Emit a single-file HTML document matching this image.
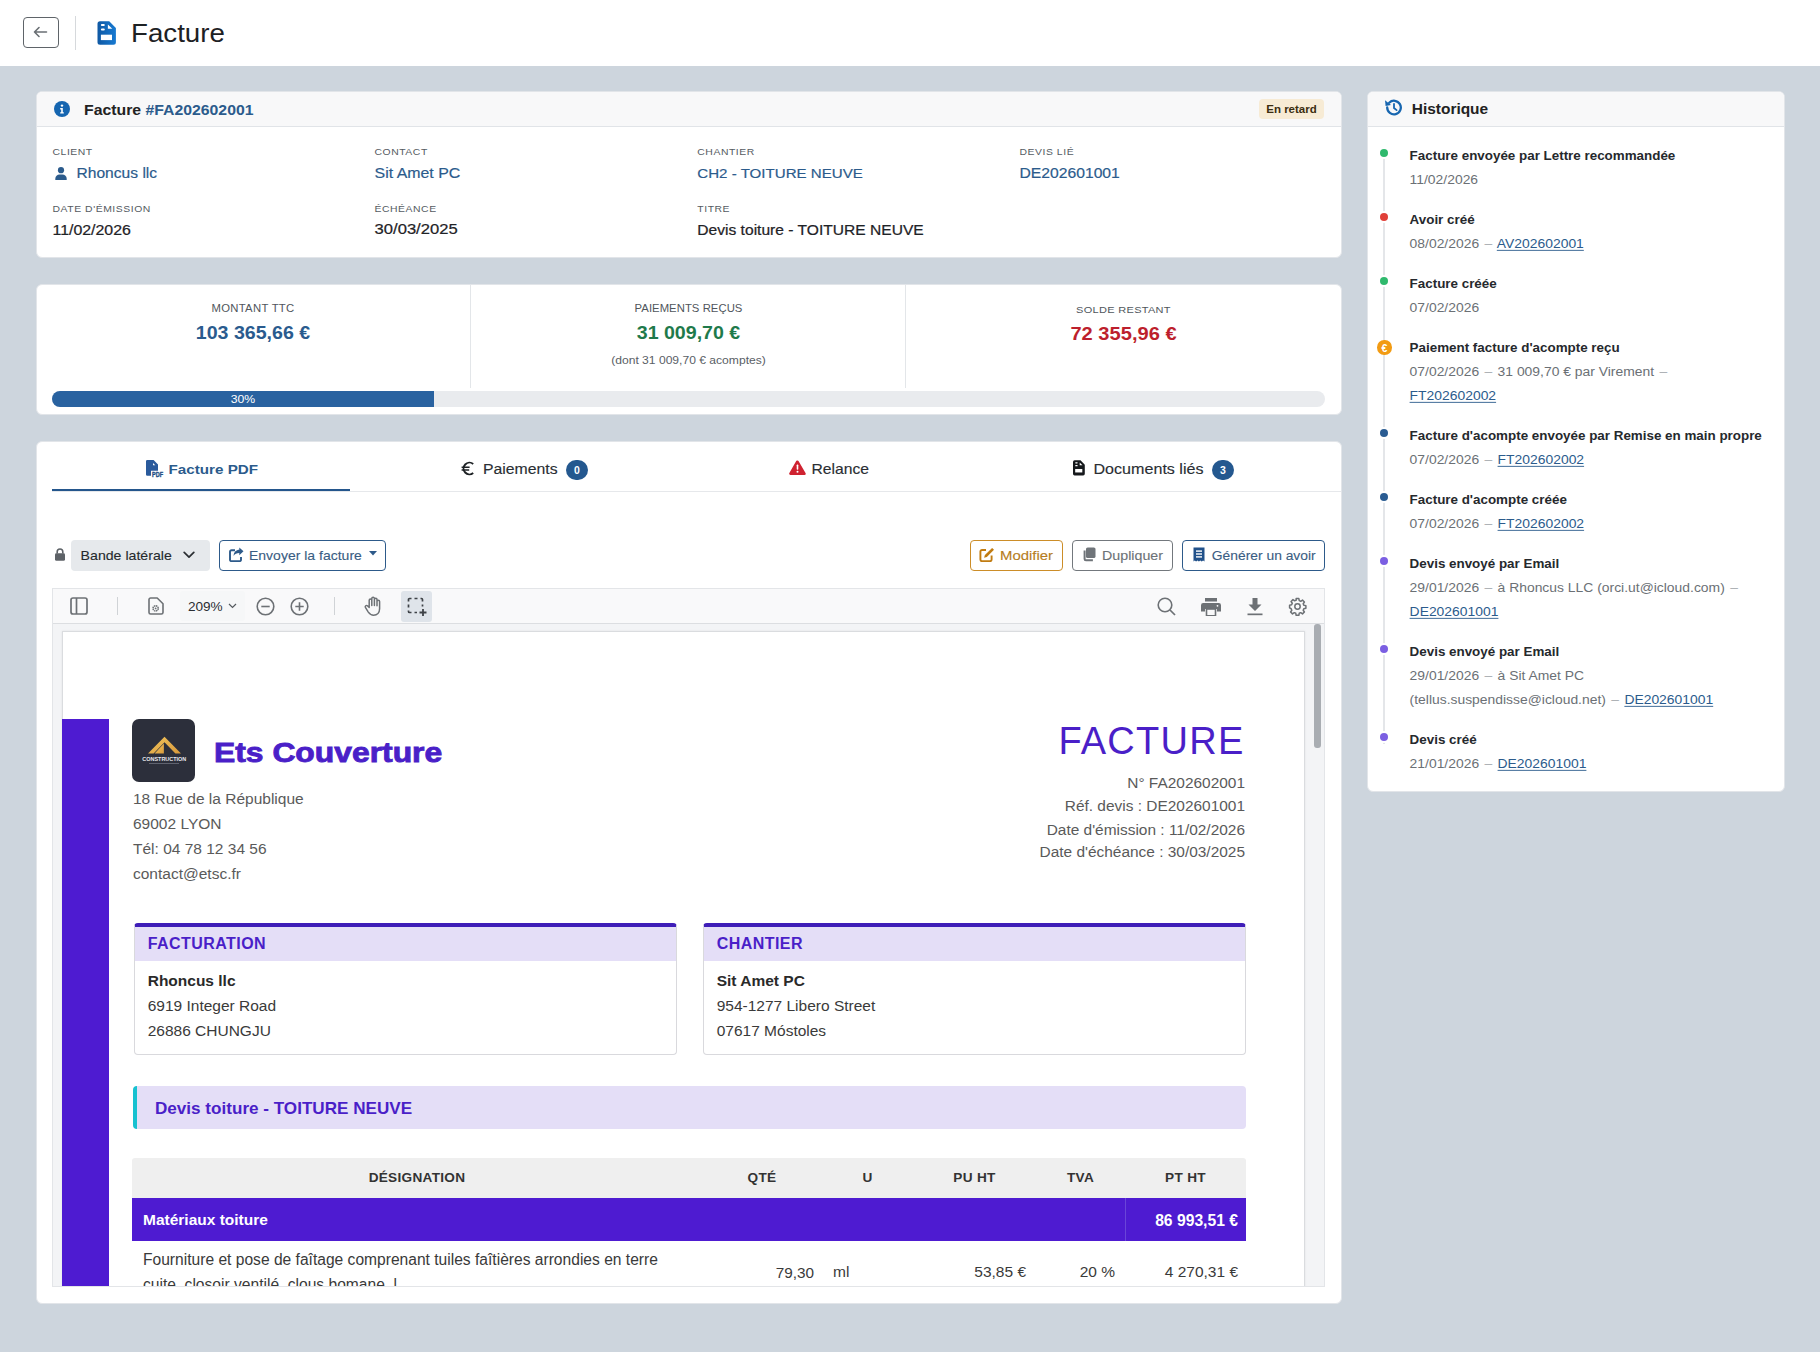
<!DOCTYPE html>
<html><head><meta charset="utf-8"><title>Facture</title>
<style>
html,body{margin:0;padding:0;}
body{width:1820px;height:1352px;position:relative;overflow:hidden;background:#cdd5dd;font-family:"Liberation Sans",sans-serif;}
.t{position:absolute;line-height:1;white-space:nowrap;}
.r{position:absolute;box-sizing:border-box;}
u{text-decoration:underline;text-underline-offset:2px;text-decoration-thickness:1px;}
</style></head><body>

<div class="r" style="left:0px;top:0px;width:1820px;height:66px;background:#fff;"></div>
<div class="r" style="left:23px;top:17px;width:36px;height:31px;border:1px solid #5f6469;border-radius:4px;"></div>
<svg class="r" style="left:32px;top:24px;" width="16" height="16" viewBox="0 0 16 16"><path d="M14.5 8H2.5M7 3.5L2.5 8 7 12.5" fill="none" stroke="#6a6f74" stroke-width="1.6" stroke-linecap="round" stroke-linejoin="round"/></svg>
<div class="r" style="left:75px;top:16px;width:1px;height:34px;background:#d6d9dc;"></div>
<svg class="r" style="left:96px;top:20px;" width="21" height="26" viewBox="0 0 21 26"><defs><linearGradient id="dg" x1="0" y1="0" x2="1" y2="0"><stop offset="0" stop-color="#0f58a3"/><stop offset="1" stop-color="#177ad2"/></linearGradient></defs><path d="M4 1.2H13.2L19.9 8V22.3A2.5 2.5 0 0 1 17.4 24.8H4A2.5 2.5 0 0 1 1.5 22.3V3.7A2.5 2.5 0 0 1 4 1.2z" fill="url(#dg)"/><path d="M11.9 4.5L16.3 8.8H11.9z" fill="#fff"/><rect x="4.9" y="4.1" width="3.9" height="1.9" rx=".9" fill="#fff"/><rect x="4.9" y="8.5" width="3.9" height="2" rx="1" fill="#fff"/><rect x="4.9" y="14.7" width="11.1" height="5.4" fill="#fff"/></svg>
<div class="t" style="font-size:27.7px;font-weight:400;color:#1d2124;top:18.55px;transform:scaleY(0.9);transform-origin:0 23.45px;left:131px;">Facture</div>
<div class="r" style="left:36px;top:91px;width:1306px;height:167px;background:#fff;border:1px solid #e2e5e9;border-radius:6px;"></div>
<div class="r" style="left:37px;top:92px;width:1304px;height:35px;background:#f8f8f9;border-bottom:1px solid #e1e4e8;border-radius:5px 5px 0 0;"></div>
<svg class="r" style="left:54px;top:101px;" width="16" height="16" viewBox="0 0 16 16"><circle cx="8" cy="8" r="8" fill="#1565b0"/><circle cx="8" cy="4.6" r="1.2" fill="#fff"/><path d="M6.2 7h2.6v4.2h1v1.4H6.2v-1.4h1V8.4h-1z" fill="#fff"/></svg>
<div class="t" style="font-size:15.8px;font-weight:700;color:#222;top:101.83px;transform:scaleY(0.9);transform-origin:0 13.37px;left:84px;">Facture <span style="color:#2b5b8c">#FA202602001</span></div>
<div class="r" style="left:1259px;top:99px;width:65px;height:20px;background:#f7ebd5;border-radius:4px;"></div>
<div class="t" style="font-size:11.5px;font-weight:700;color:#3b2d10;top:103.77px;transform:scaleY(0.9);transform-origin:0 9.73px;left:691.5px;width:1200px;text-align:center;">En retard</div>
<div class="t" style="font-size:10.4px;font-weight:400;color:#555b62;top:147.20px;letter-spacing:0.55px;transform:scaleY(0.9);transform-origin:0 8.80px;left:52.5px;">CLIENT</div>
<div class="t" style="font-size:10.4px;font-weight:400;color:#555b62;top:147.20px;letter-spacing:0.55px;transform:scaleY(0.9);transform-origin:0 8.80px;left:374.5px;">CONTACT</div>
<div class="t" style="font-size:10.4px;font-weight:400;color:#555b62;top:147.20px;letter-spacing:0.55px;transform:scaleY(0.9);transform-origin:0 8.80px;left:697.3px;">CHANTIER</div>
<div class="t" style="font-size:10.4px;font-weight:400;color:#555b62;top:147.20px;letter-spacing:0.55px;transform:scaleY(0.9);transform-origin:0 8.80px;left:1019.5px;">DEVIS LIÉ</div>
<div class="t" style="font-size:10.4px;font-weight:400;color:#555b62;top:204.20px;letter-spacing:0.55px;transform:scaleY(0.9);transform-origin:0 8.80px;left:52.5px;">DATE D'ÉMISSION</div>
<div class="t" style="font-size:10.4px;font-weight:400;color:#555b62;top:204.20px;letter-spacing:0.55px;transform:scaleY(0.9);transform-origin:0 8.80px;left:374.5px;">ÉCHÉANCE</div>
<div class="t" style="font-size:10.4px;font-weight:400;color:#555b62;top:204.20px;letter-spacing:0.55px;transform:scaleY(0.9);transform-origin:0 8.80px;left:697.3px;">TITRE</div>
<svg class="r" style="left:55px;top:167px;" width="12" height="13" viewBox="0 0 12 13"><circle cx="6" cy="3.2" r="3.1" fill="#2b5b8c"/><path d="M0.3 13v-1.2C0.3 9.3 2.3 7.6 4.5 7.6h3c2.2 0 4.2 1.7 4.2 4.2V13z" fill="#2b5b8c"/></svg>
<div class="t" style="font-size:15.6px;font-weight:400;color:#2b5b8c;top:164.79px;-webkit-text-stroke:0.2px #2b5b8c;transform:scaleY(0.9);transform-origin:0 13.21px;left:76.5px;">Rhoncus llc</div>
<div class="t" style="font-size:15.9px;font-weight:400;color:#2b5b8c;top:164.54px;-webkit-text-stroke:0.2px #2b5b8c;transform:scaleY(0.9);transform-origin:0 13.46px;left:374.6px;">Sit Amet PC</div>
<div class="t" style="font-size:15.1px;font-weight:400;color:#2b5b8c;top:165.22px;-webkit-text-stroke:0.2px #2b5b8c;transform:scaleY(0.9);transform-origin:0 12.78px;left:697.3px;">CH2 - TOITURE NEUVE</div>
<div class="t" style="font-size:15.7px;font-weight:400;color:#2b5b8c;top:164.71px;-webkit-text-stroke:0.2px #2b5b8c;transform:scaleY(0.9);transform-origin:0 13.29px;left:1019.5px;">DE202601001</div>
<div class="t" style="font-size:15.9px;font-weight:400;color:#1f2327;top:221.54px;-webkit-text-stroke:0.25px #1f2327;transform:scaleY(0.9);transform-origin:0 13.46px;left:52.5px;">11/02/2026</div>
<div class="t" style="font-size:16.6px;font-weight:400;color:#1f2327;top:220.95px;-webkit-text-stroke:0.25px #1f2327;transform:scaleY(0.9);transform-origin:0 14.05px;left:374.6px;">30/03/2025</div>
<div class="t" style="font-size:15.6px;font-weight:400;color:#1f2327;top:221.79px;-webkit-text-stroke:0.25px #1f2327;transform:scaleY(0.9);transform-origin:0 13.21px;left:697.3px;">Devis toiture - TOITURE NEUVE</div>
<div class="r" style="left:36px;top:284px;width:1306px;height:131px;background:#fff;border:1px solid #e2e5e9;border-radius:6px;"></div>
<div class="r" style="left:470px;top:285px;width:1px;height:103px;background:#e3e6e9;"></div>
<div class="r" style="left:905px;top:285px;width:1px;height:103px;background:#e3e6e9;"></div>
<div class="t" style="font-size:11.3px;font-weight:400;color:#50565c;top:302.93px;letter-spacing:0.3px;transform:scaleY(0.9);transform-origin:0 9.57px;left:-347px;width:1200px;text-align:center;">MONTANT TTC</div>
<div class="t" style="font-size:19.6px;font-weight:700;color:#2a5b8e;top:322.61px;transform:scaleY(0.95);transform-origin:0 16.59px;left:-347px;width:1200px;text-align:center;">103 365,66 €</div>
<div class="t" style="font-size:11.3px;font-weight:400;color:#50565c;top:302.93px;letter-spacing:0.05px;transform:scaleY(0.9);transform-origin:0 9.57px;left:88.5px;width:1200px;text-align:center;">PAIEMENTS REÇUS</div>
<div class="t" style="font-size:19.6px;font-weight:700;color:#1f7a4b;top:322.61px;transform:scaleY(0.95);transform-origin:0 16.59px;left:88.5px;width:1200px;text-align:center;">31 009,70 €</div>
<div class="t" style="font-size:12.1px;font-weight:400;color:#5a6066;top:354.06px;transform:scaleY(0.9);transform-origin:0 10.24px;left:88.5px;width:1200px;text-align:center;">(dont 31 009,70 € acomptes)</div>
<div class="t" style="font-size:11.0px;font-weight:400;color:#50565c;top:303.99px;letter-spacing:0.3px;transform:scaleY(0.9);transform-origin:0 9.31px;left:523.5px;width:1200px;text-align:center;">SOLDE RESTANT</div>
<div class="t" style="font-size:20.1px;font-weight:700;color:#bd1f2d;top:322.99px;transform:scaleY(0.95);transform-origin:0 17.01px;left:523.5px;width:1200px;text-align:center;">72 355,96 €</div>
<div class="r" style="left:52px;top:391px;width:1273px;height:16px;background:#e9ebee;border-radius:8px;overflow:hidden;"></div>
<div class="r" style="left:52px;top:391px;width:382px;height:16px;background:#2962a0;border-radius:8px 0 0 8px;"></div>
<div class="t" style="font-size:12.2px;font-weight:400;color:#fff;top:392.87px;transform:scaleY(0.9);transform-origin:0 10.33px;left:-357px;width:1200px;text-align:center;">30%</div>
<div class="r" style="left:36px;top:441px;width:1306px;height:863px;background:#fff;border:1px solid #e2e5e9;border-radius:6px;"></div>
<div class="r" style="left:52px;top:491px;width:1289px;height:1px;background:#e6e8eb;"></div>
<div class="r" style="left:52px;top:489px;width:298px;height:2px;background:#24568c;"></div>
<svg class="r" style="left:140px;top:455px;" width="30" height="27" viewBox="0 0 30 27"><path d="M7.3 5H13.6L18 9.6V15.8H11V20.8H7.3A1.3 1.3 0 0 1 6 19.5V6.3A1.3 1.3 0 0 1 7.3 5z" fill="#2a5a9c"/><path d="M13 7.9L15.3 10.2H13z" fill="#fff"/><text x="12" y="21.9" font-family="Liberation Sans" font-weight="700" font-size="6.4" fill="#1f4f86" stroke="#1f4f86" stroke-width=".35" textLength="11" lengthAdjust="spacingAndGlyphs">PDF</text></svg>
<div class="t" style="font-size:15.2px;font-weight:700;color:#2b5b8c;top:461.13px;transform:scaleY(0.9);transform-origin:0 12.87px;left:168.6px;">Facture PDF</div>
<svg class="r" style="left:460.5px;top:460.5px;" width="14" height="15" viewBox="0 0 14 15"><path d="M12.2 2.9A5.9 5.9 0 1 0 12.2 12.1" fill="none" stroke="#1d2124" stroke-width="1.9"/><path d="M0.6 6.2H8.6M0.6 9H8.2" stroke="#1d2124" stroke-width="1.6"/></svg>
<div class="t" style="font-size:15.8px;font-weight:400;color:#2a2e33;top:460.63px;-webkit-text-stroke:0.15px #2a2e33;transform:scaleY(0.9);transform-origin:0 13.37px;left:483px;">Paiements</div>
<div class="r" style="left:566px;top:460px;width:22px;height:20px;background:#24588f;border-radius:11px;"></div>
<div class="t" style="font-size:10.5px;font-weight:700;color:#fff;top:465.11px;left:-23px;width:1200px;text-align:center;">0</div>
<svg class="r" style="left:789px;top:460px;" width="17" height="15" viewBox="0 0 17 15"><path d="M8.5 0.5a1.3 1.3 0 0 1 1.15.66l7 12.2A1.3 1.3 0 0 1 15.5 15h-14a1.3 1.3 0 0 1-1.15-1.94l7-12.2A1.3 1.3 0 0 1 8.5.5z" fill="#cf2230"/><rect x="7.7" y="4.6" width="1.6" height="5.2" rx=".7" fill="#fff"/><circle cx="8.5" cy="11.8" r="1" fill="#fff"/></svg>
<div class="t" style="font-size:15.7px;font-weight:400;color:#2a2e33;top:460.71px;-webkit-text-stroke:0.15px #2a2e33;transform:scaleY(0.9);transform-origin:0 13.29px;left:811.4px;">Relance</div>
<svg class="r" style="left:1073.2px;top:460px;overflow:visible;" width="11.8" height="15.8" viewBox="1.5 1.2 18.4 23.6"><path d="M4 1.2H13.2L19.9 8V22.3A2.5 2.5 0 0 1 17.4 24.8H4A2.5 2.5 0 0 1 1.5 22.3V3.7A2.5 2.5 0 0 1 4 1.2z" fill="#16191c"/><path d="M11.9 4.5L16.3 8.8H11.9z" fill="#fff"/><rect x="4.9" y="4.1" width="3.9" height="1.9" rx=".9" fill="#fff"/><rect x="4.9" y="8.5" width="3.9" height="2" rx="1" fill="#fff"/><rect x="4.9" y="14.7" width="11.1" height="5.4" fill="#fff"/></svg>
<div class="t" style="font-size:16.1px;font-weight:400;color:#2a2e33;top:460.37px;-webkit-text-stroke:0.15px #2a2e33;transform:scaleY(0.9);transform-origin:0 13.63px;left:1093.5px;">Documents liés</div>
<div class="r" style="left:1212px;top:460px;width:22px;height:20px;background:#24588f;border-radius:11px;"></div>
<div class="t" style="font-size:10.5px;font-weight:700;color:#fff;top:465.11px;left:623px;width:1200px;text-align:center;">3</div>
<svg class="r" style="left:55px;top:548px;" width="10" height="13" viewBox="0 0 10 13"><path d="M2.2 5.5V3.8a2.8 2.8 0 0 1 5.6 0v1.7" fill="none" stroke="#5d6267" stroke-width="1.6"/><rect x="0" y="5.3" width="10" height="7.5" rx="1.4" fill="#5d6267"/></svg>
<div class="r" style="left:71px;top:540px;width:138.5px;height:30.5px;background:#e6e9ec;border-radius:4px;"></div>
<div class="t" style="font-size:14.15px;font-weight:400;color:#25292d;top:548.32px;-webkit-text-stroke:0.12px #25292d;transform:scaleY(0.9);transform-origin:0 11.98px;left:80.6px;">Bande latérale</div>
<svg class="r" style="left:183px;top:551px;" width="12" height="8" viewBox="0 0 12 8"><path d="M1.2 1.4L6 6.2l4.8-4.8" fill="none" stroke="#2b2f33" stroke-width="1.7" stroke-linecap="round" stroke-linejoin="round"/></svg>
<div class="r" style="left:218.5px;top:540px;width:167.5px;height:30.5px;border:1.5px solid #2d5a8a;border-radius:4px;"></div>
<svg class="r" style="left:229px;top:547px;" width="15" height="15" viewBox="0 0 15 15"><path d="M6 3.2H2.5A1.5 1.5 0 0 0 1 4.7v8A1.5 1.5 0 0 0 2.5 14.2h8A1.5 1.5 0 0 0 12 12.7V10" fill="none" stroke="#2d5a8a" stroke-width="1.9"/><path d="M14.5 4.3L10.3 0.5v2.2C7.2 2.8 4.8 4.6 4.6 9c1.3-2.2 3-2.9 5.7-2.9v2.2z" fill="#2d5a8a"/></svg>
<div class="t" style="font-size:14.0px;font-weight:400;color:#3a5d83;top:548.45px;-webkit-text-stroke:0.12px #3a5d83;transform:scaleY(0.9);transform-origin:0 11.85px;left:249px;">Envoyer la facture</div>
<svg class="r" style="left:369px;top:551px;" width="8" height="5" viewBox="0 0 8 5"><path d="M0 0h8L4 4.5z" fill="#2d5a8a"/></svg>
<div class="r" style="left:969.5px;top:540px;width:93.5px;height:30.5px;border:1.5px solid #cc8d28;border-radius:4px;"></div>
<svg class="r" style="left:979px;top:547px;" width="16" height="15" viewBox="0 0 16 15"><path d="M7 3H3A1.6 1.6 0 0 0 1.4 4.6v8A1.6 1.6 0 0 0 3 14.2h8A1.6 1.6 0 0 0 12.6 12.6V8.5" fill="none" stroke="#c17c12" stroke-width="1.9"/><path d="M13.1 0.9l1.9 1.9-7.2 7.2-2.7.8.8-2.7z" fill="#c17c12"/></svg>
<div class="t" style="font-size:14.9px;font-weight:400;color:#b57c22;top:547.69px;-webkit-text-stroke:0.12px #b57c22;transform:scaleY(0.9);transform-origin:0 12.61px;left:1000px;">Modifier</div>
<div class="r" style="left:1071.5px;top:540px;width:101.5px;height:30.5px;border:1.5px solid #73787d;border-radius:4px;"></div>
<svg class="r" style="left:1082px;top:547px;" width="14" height="15" viewBox="0 0 14 15"><rect x="4" y="0.5" width="9.5" height="10.5" rx="1.6" fill="#6f7479"/><path d="M2.6 3.4v8.6a1.3 1.3 0 0 0 1.3 1.3h7" fill="none" stroke="#6f7479" stroke-width="2"/></svg>
<div class="t" style="font-size:14.25px;font-weight:400;color:#6c7277;top:548.24px;-webkit-text-stroke:0.12px #6c7277;transform:scaleY(0.9);transform-origin:0 12.06px;left:1102px;">Dupliquer</div>
<div class="r" style="left:1181.5px;top:540px;width:143.5px;height:30.5px;border:1.5px solid #2d5a8a;border-radius:4px;"></div>
<svg class="r" style="left:1193px;top:547px;" width="12" height="15" viewBox="0 0 12 15"><path d="M0.5 0.5h11v14l-1.4-1-1.4 1-1.4-1-1.4 1-1.4-1-1.4 1-1.4-1-1.2 1z" fill="#21518a"/><rect x="3" y="3.4" width="6" height="1.4" fill="#fff"/><rect x="3" y="6.3" width="6" height="1.4" fill="#fff"/><rect x="3" y="9.2" width="6" height="1.4" fill="#fff"/></svg>
<div class="t" style="font-size:13.85px;font-weight:400;color:#3a5d83;top:548.58px;-webkit-text-stroke:0.12px #3a5d83;transform:scaleY(0.9);transform-origin:0 11.72px;left:1211.8px;">Générer un avoir</div>
<div class="r" style="left:52px;top:587.5px;width:1273px;height:699.5px;border:1px solid #e3e5e8;background:#f3f4f6;"></div>
<div class="r" style="left:53px;top:588.5px;width:1271px;height:35.0px;background:#f9f9fa;border-bottom:1px solid #dcdee1;"></div>
<svg class="r" style="left:70px;top:597px;" width="18" height="18" viewBox="0 0 18 18"><rect x="1" y="1" width="16" height="16" rx="2" fill="none" stroke="#6d7175" stroke-width="1.7"/><path d="M6.5 1v16" stroke="#6d7175" stroke-width="1.7"/></svg>
<div class="r" style="left:117px;top:596.5px;width:1px;height:18.5px;background:#d0d3d6;"></div>
<svg class="r" style="left:148px;top:597px;" width="16" height="18" viewBox="0 0 16 18"><path d="M2.6 1h6.6L15 6.8v8.7A1.6 1.6 0 0 1 13.4 17H2.6A1.6 1.6 0 0 1 1 15.4V2.6A1.6 1.6 0 0 1 2.6 1z" fill="none" stroke="#6d7175" stroke-width="1.6" stroke-linejoin="round"/><circle cx="7.6" cy="11.4" r="2.6" fill="none" stroke="#6d7175" stroke-width="1.5" stroke-dasharray="1.5 .55"/><circle cx="7.6" cy="11.4" r=".9" fill="#6d7175"/></svg>
<div class="r" style="left:180px;top:591px;width:65px;height:30px;background:#f6f7f8;border-radius:3px;"></div>
<div class="t" style="font-size:13.6px;font-weight:400;color:#2a2e33;top:599.69px;transform:scaleY(0.9);transform-origin:0 11.51px;left:187.9px;">209%</div>
<svg class="r" style="left:228px;top:603px;" width="9" height="6" viewBox="0 0 9 6"><path d="M1 1l3.5 3.5L8 1" fill="none" stroke="#555a5f" stroke-width="1.2"/></svg>
<svg class="r" style="left:256px;top:597px;" width="19" height="19" viewBox="0 0 19 19"><circle cx="9.5" cy="9.5" r="8.3" fill="none" stroke="#6d7175" stroke-width="1.6"/><path d="M5.3 9.5h8.4" stroke="#6d7175" stroke-width="1.6"/></svg>
<svg class="r" style="left:290px;top:597px;" width="19" height="19" viewBox="0 0 19 19"><circle cx="9.5" cy="9.5" r="8.3" fill="none" stroke="#6d7175" stroke-width="1.6"/><path d="M5.3 9.5h8.4M9.5 5.3v8.4" stroke="#6d7175" stroke-width="1.6"/></svg>
<div class="r" style="left:334px;top:596.5px;width:1px;height:18.5px;background:#d0d3d6;"></div>
<svg class="r" style="left:363px;top:596px;" width="20" height="20" viewBox="0 0 20 20"><path d="M6.2 11.5V4.2a1.3 1.3 0 0 1 2.6 0v5.3V2.6a1.3 1.3 0 0 1 2.6 0v6.9V3.6a1.3 1.3 0 0 1 2.6 0v6.2V5.6a1.3 1.3 0 0 1 2.6 0v7.2c0 3.8-2.5 6.4-6 6.4-2.6 0-3.9-1.2-5.3-3.1L2.4 11.4a1.3 1.3 0 0 1 2-1.6z" fill="none" stroke="#6d7175" stroke-width="1.5" stroke-linejoin="round"/></svg>
<div class="r" style="left:401px;top:590.5px;width:31px;height:31.0px;background:#dfe4ea;border-radius:3px;"></div>
<svg class="r" style="left:407px;top:597px;" width="20" height="20" viewBox="0 0 20 20"><path d="M1.5 4.5V2.5a1 1 0 0 1 1-1h2M7.5 1.5h3M13.5 1.5h1a1 1 0 0 1 1 1v2M15.5 7.5v2M1.5 7.5v3M1.5 13.5v1a1 1 0 0 0 1 1h2M7.5 15.5h2.5" fill="none" stroke="#3e4247" stroke-width="1.7"/><path d="M16 12v7M12.5 15.5h7" stroke="#3e4247" stroke-width="1.8"/></svg>
<svg class="r" style="left:1157px;top:597px;" width="19" height="19" viewBox="0 0 19 19"><circle cx="8" cy="8" r="6.8" fill="none" stroke="#6d7175" stroke-width="1.6"/><path d="M13 13l5 5" stroke="#6d7175" stroke-width="1.7"/></svg>
<svg class="r" style="left:1201px;top:598px;" width="20" height="18" viewBox="0 0 20 18"><rect x="4" y="0" width="12" height="3.5" fill="#6d7175"/><path d="M2.2 5h15.6A2.2 2.2 0 0 1 20 7.2V13.5h-4V11H4v2.5H0V7.2A2.2 2.2 0 0 1 2.2 5z" fill="#6d7175"/><rect x="5.5" y="11" width="9" height="6.8" fill="none" stroke="#6d7175" stroke-width="1.6"/><circle cx="16.5" cy="7.8" r=".9" fill="#fff"/></svg>
<svg class="r" style="left:1247px;top:598px;" width="16" height="18" viewBox="0 0 16 18"><path d="M5.5 0h5v6.5h4L8 13 1.5 6.5h4z" fill="#6d7175"/><rect x="0.5" y="15.5" width="15" height="1.7" fill="#6d7175"/></svg>
<svg class="r" style="left:1288px;top:597px;" width="19" height="19" viewBox="0 0 24 24"><path d="M10.3 2h3.4l.5 2.6 1.9.8 2.2-1.5 2.4 2.4-1.5 2.2.8 1.9 2.6.5v3.4l-2.6.5-.8 1.9 1.5 2.2-2.4 2.4-2.2-1.5-1.9.8-.5 2.6h-3.4l-.5-2.6-1.9-.8-2.2 1.5-2.4-2.4 1.5-2.2-.8-1.9L2 13.7v-3.4l2.6-.5.8-1.9-1.5-2.2 2.4-2.4 2.2 1.5 1.9-.8z" fill="none" stroke="#6d7175" stroke-width="1.9" stroke-linejoin="round"/><circle cx="12" cy="12" r="3.4" fill="none" stroke="#6d7175" stroke-width="1.9"/></svg>
<div class="r" style="left:1314px;top:624px;width:7px;height:124px;background:#a9adb2;border-radius:3px;"></div>
<div class="r" style="left:53px;top:624px;width:1261px;height:662px;overflow:hidden;">
<div class="r" style="left:8.5px;top:7px;width:1243px;height:900px;background:#fff;border:1px solid #dadcdf;box-shadow:0 0 2px rgba(0,0,0,.08);">
</div></div>
<div class="r" style="left:0;top:0;width:1820px;height:1286px;overflow:hidden;clip-path:inset(624px 516px 0 53px);">
<div class="r" style="left:62px;top:719px;width:47px;height:581px;background:#4e1bd1;"></div>
<div class="r" style="left:132px;top:719px;width:63px;height:63px;background:#2c2f3b;border-radius:7px;"></div>
<svg class="r" style="left:130px;top:715px;" width="70" height="70" viewBox="0 0 70 70"><defs><linearGradient id="gd" x1="0" y1="0" x2="1" y2="1"><stop offset="0" stop-color="#f0c45c"/><stop offset="1" stop-color="#d99a3c"/></linearGradient></defs><path d="M18 38.5L34.5 21.8 51 38.5h-5.6L34.5 27.3 23.6 38.5z" fill="url(#gd)"/><path d="M24.6 38.5L33.9 28.6v9.9z" fill="url(#gd)"/><text x="34.3" y="46.2" text-anchor="middle" font-family="Liberation Sans" font-weight="700" font-size="5.6" fill="#e8e8ee" textLength="44" lengthAdjust="spacingAndGlyphs">CONSTRUCTION</text><rect x="19" y="48" width="30" height=".7" fill="#777a88"/></svg>
<div class="t" style="font-size:28.3px;font-weight:700;color:#4a1fc8;top:738.34px;-webkit-text-stroke:0.9px #4a1fc8;transform:scaleX(1.125);transform-origin:0 23.96px;left:214.3px;">Ets Couverture</div>
<div class="t" style="font-size:15.5px;font-weight:400;color:#5a5a5a;top:790.88px;left:133px;">18 Rue de la République</div>
<div class="t" style="font-size:15.5px;font-weight:400;color:#5a5a5a;top:815.88px;left:133px;">69002 LYON</div>
<div class="t" style="font-size:15.5px;font-weight:400;color:#5a5a5a;top:840.88px;left:133px;">Tél: 04 78 12 34 56</div>
<div class="t" style="font-size:15.5px;font-weight:400;color:#5a5a5a;top:865.88px;left:133px;">contact@etsc.fr</div>
<div class="t" style="font-size:38px;font-weight:400;color:#4a1fc8;top:722.03px;letter-spacing:1.25px;left:44.5px;width:1200px;text-align:right;margin-right:-1.25px;">FACTURE</div>
<div class="t" style="font-size:15.45px;font-weight:400;color:#5a5a5a;top:774.92px;left:45px;width:1200px;text-align:right;">N° FA202602001</div>
<div class="t" style="font-size:15.45px;font-weight:400;color:#5a5a5a;top:798.42px;left:45px;width:1200px;text-align:right;">Réf. devis : DE202601001</div>
<div class="t" style="font-size:15.45px;font-weight:400;color:#5a5a5a;top:821.92px;left:45px;width:1200px;text-align:right;">Date d'émission : 11/02/2026</div>
<div class="t" style="font-size:15.45px;font-weight:400;color:#5a5a5a;top:844.42px;left:45px;width:1200px;text-align:right;">Date d'échéance : 30/03/2025</div>
<div class="r" style="left:133.5px;top:923px;width:543.5px;height:131.5px;border:1px solid #d9d9dd;border-top:4px solid #3e1db8;border-radius:4px;overflow:hidden;"><div class="r" style="left:0;top:0;right:0;height:33.5px;background:#e4def7;"></div></div>
<div class="t" style="font-size:16px;font-weight:700;color:#4a1fc8;top:936.46px;letter-spacing:0.45px;left:147.7px;">FACTURATION</div>
<div class="t" style="font-size:15.5px;font-weight:700;color:#2a2a2a;top:973.38px;left:147.7px;">Rhoncus llc</div>
<div class="t" style="font-size:15.5px;font-weight:400;color:#3a3a3a;top:998.38px;left:147.7px;">6919 Integer Road</div>
<div class="t" style="font-size:15.5px;font-weight:400;color:#3a3a3a;top:1023.38px;left:147.7px;">26886 CHUNGJU</div>
<div class="r" style="left:702.5px;top:923px;width:543.5px;height:131.5px;border:1px solid #d9d9dd;border-top:4px solid #3e1db8;border-radius:4px;overflow:hidden;"><div class="r" style="left:0;top:0;right:0;height:33.5px;background:#e4def7;"></div></div>
<div class="t" style="font-size:16px;font-weight:700;color:#4a1fc8;top:936.46px;letter-spacing:0.45px;left:716.7px;">CHANTIER</div>
<div class="t" style="font-size:15.5px;font-weight:700;color:#2a2a2a;top:973.38px;left:716.7px;">Sit Amet PC</div>
<div class="t" style="font-size:15.5px;font-weight:400;color:#3a3a3a;top:998.38px;left:716.7px;">954-1277 Libero Street</div>
<div class="t" style="font-size:15.5px;font-weight:400;color:#3a3a3a;top:1023.38px;left:716.7px;">07617 Móstoles</div>
<div class="r" style="left:133px;top:1086px;width:1113px;height:43px;background:#e4def7;border-left:4px solid #17c1d0;border-radius:4px;"></div>
<div class="t" style="font-size:17.1px;font-weight:700;color:#4a1fc8;top:1099.52px;left:155px;">Devis toiture - TOITURE NEUVE</div>
<div class="r" style="left:132px;top:1158px;width:1114px;height:40px;background:#efefef;border-radius:3px 3px 0 0;"></div>
<div class="t" style="font-size:13.6px;font-weight:700;color:#333;top:1170.99px;letter-spacing:0.3px;left:-183px;width:1200px;text-align:center;">DÉSIGNATION</div>
<div class="t" style="font-size:13.6px;font-weight:700;color:#333;top:1170.99px;letter-spacing:0.3px;left:162px;width:1200px;text-align:center;">QTÉ</div>
<div class="t" style="font-size:13.6px;font-weight:700;color:#333;top:1170.99px;letter-spacing:0.3px;left:267.5px;width:1200px;text-align:center;">U</div>
<div class="t" style="font-size:13.6px;font-weight:700;color:#333;top:1170.99px;letter-spacing:0.3px;left:374.5px;width:1200px;text-align:center;">PU HT</div>
<div class="t" style="font-size:13.6px;font-weight:700;color:#333;top:1170.99px;letter-spacing:0.3px;left:480.5px;width:1200px;text-align:center;">TVA</div>
<div class="t" style="font-size:13.6px;font-weight:700;color:#333;top:1170.99px;letter-spacing:0.3px;left:585.5px;width:1200px;text-align:center;">PT HT</div>
<div class="r" style="left:132px;top:1198px;width:1114px;height:43px;background:#4e1bd1;"></div>
<div class="r" style="left:1125px;top:1198px;width:1px;height:43px;background:#6a45d8;"></div>
<div class="t" style="font-size:15.5px;font-weight:700;color:#fff;top:1212.38px;left:143px;">Matériaux toiture</div>
<div class="t" style="font-size:15.7px;font-weight:700;color:#fff;top:1213.21px;left:38px;width:1200px;text-align:right;">86 993,51 €</div>
<div class="t" style="font-size:15.6px;font-weight:400;color:#3a3a3a;top:1251.79px;left:143px;">Fourniture et pose de faîtage comprenant tuiles faîtières arrondies en terre</div>
<div class="t" style="font-size:15.6px;font-weight:400;color:#3a3a3a;top:1276.79px;left:143px;">cuite, closoir ventilé, clous bomane, l</div>
<div class="t" style="font-size:15.3px;font-weight:400;color:#3a3a3a;top:1264.55px;left:-386px;width:1200px;text-align:right;">79,30</div>
<div class="t" style="font-size:15.5px;font-weight:400;color:#3a3a3a;top:1264.38px;left:833px;">ml</div>
<div class="t" style="font-size:15.5px;font-weight:400;color:#3a3a3a;top:1264.38px;left:-174px;width:1200px;text-align:right;">53,85 €</div>
<div class="t" style="font-size:15.5px;font-weight:400;color:#3a3a3a;top:1264.38px;left:-85px;width:1200px;text-align:right;">20 %</div>
<div class="t" style="font-size:15.5px;font-weight:400;color:#3a3a3a;top:1264.38px;left:38px;width:1200px;text-align:right;">4 270,31 €</div>
</div>
<div class="r" style="left:1367px;top:91px;width:418px;height:701px;background:#fff;border:1px solid #e2e5e9;border-radius:6px;"></div>
<div class="r" style="left:1368px;top:92px;width:416px;height:35px;background:#f8f8f9;border-bottom:1px solid #e1e4e8;border-radius:5px 5px 0 0;"></div>
<svg class="r" style="left:1384px;top:98.8px;" width="18" height="17" viewBox="0 0 18 17"><path d="M3.2 8.5A6.8 6.8 0 1 0 5.2 3.7" fill="none" stroke="#1766b0" stroke-width="2.3" stroke-linecap="round"/><path d="M1 1.3l.6 5.6 5.4-.9z" fill="#1766b0"/><path d="M10 5v4l2.6 2.1" fill="none" stroke="#1766b0" stroke-width="1.8" stroke-linecap="round"/></svg>
<div class="t" style="font-size:15.45px;font-weight:700;color:#222;top:101.02px;transform:scaleY(0.9);transform-origin:0 13.08px;left:1411.8px;">Historique</div>
<div class="r" style="left:1383px;top:157px;width:2px;height:587px;background:#e4e6e9;"></div>
<div class="r" style="left:1380px;top:149px;width:8px;height:8px;border-radius:50%;background:#2fb96d;box-shadow:0 0 0 2px #fff;"></div>
<div class="t" style="font-size:13.4px;font-weight:700;color:#26292d;top:148.66px;transform:scaleY(0.9);transform-origin:0 11.34px;left:1409.6px;">Facture envoyée par Lettre recommandée</div>
<div class="t" style="font-size:13.9px;font-weight:400;color:#6b7075;top:172.93px;transform:scaleY(0.9);transform-origin:0 11.77px;left:1409.6px;">11/02/2026</div>
<div class="r" style="left:1380px;top:213px;width:8px;height:8px;border-radius:50%;background:#e04039;box-shadow:0 0 0 2px #fff;"></div>
<div class="t" style="font-size:13.4px;font-weight:700;color:#26292d;top:212.66px;transform:scaleY(0.9);transform-origin:0 11.34px;left:1409.6px;">Avoir créé</div>
<div class="t" style="font-size:13.9px;font-weight:400;color:#6b7075;top:236.93px;transform:scaleY(0.9);transform-origin:0 11.77px;left:1409.6px;">08/02/2026 <span style="color:#a9adb2;margin:0 1.5px;">–</span> <u style="color:#2b5b8c">AV202602001</u></div>
<div class="r" style="left:1380px;top:277px;width:8px;height:8px;border-radius:50%;background:#2fb96d;box-shadow:0 0 0 2px #fff;"></div>
<div class="t" style="font-size:13.4px;font-weight:700;color:#26292d;top:276.66px;transform:scaleY(0.9);transform-origin:0 11.34px;left:1409.6px;">Facture créée</div>
<div class="t" style="font-size:13.9px;font-weight:400;color:#6b7075;top:300.93px;transform:scaleY(0.9);transform-origin:0 11.77px;left:1409.6px;">07/02/2026</div>
<div class="r" style="left:1377px;top:340px;width:14.5px;height:14.5px;border-radius:50%;background:#f29b13;"></div>
<div class="t" style="font-size:10.5px;font-weight:700;color:#fff;top:342.61px;left:784.3px;width:1200px;text-align:center;">€</div>
<div class="t" style="font-size:13.4px;font-weight:700;color:#26292d;top:340.66px;transform:scaleY(0.9);transform-origin:0 11.34px;left:1409.6px;">Paiement facture d'acompte reçu</div>
<div class="t" style="font-size:13.9px;font-weight:400;color:#6b7075;top:364.93px;transform:scaleY(0.9);transform-origin:0 11.77px;left:1409.6px;">07/02/2026 <span style="color:#a9adb2;margin:0 1.5px;">–</span> 31 009,70 € par Virement <span style="color:#a9adb2;margin:0 1.5px;">–</span></div>
<div class="t" style="font-size:13.9px;font-weight:400;color:#6b7075;top:388.93px;transform:scaleY(0.9);transform-origin:0 11.77px;left:1409.6px;"><u style="color:#2b5b8c">FT202602002</u></div>
<div class="r" style="left:1380px;top:429px;width:8px;height:8px;border-radius:50%;background:#2a5c92;box-shadow:0 0 0 2px #fff;"></div>
<div class="t" style="font-size:13.4px;font-weight:700;color:#26292d;top:428.66px;transform:scaleY(0.9);transform-origin:0 11.34px;left:1409.6px;">Facture d'acompte envoyée par Remise en main propre</div>
<div class="t" style="font-size:13.9px;font-weight:400;color:#6b7075;top:452.93px;transform:scaleY(0.9);transform-origin:0 11.77px;left:1409.6px;">07/02/2026 <span style="color:#a9adb2;margin:0 1.5px;">–</span> <u style="color:#2b5b8c">FT202602002</u></div>
<div class="r" style="left:1380px;top:493px;width:8px;height:8px;border-radius:50%;background:#2a5c92;box-shadow:0 0 0 2px #fff;"></div>
<div class="t" style="font-size:13.4px;font-weight:700;color:#26292d;top:492.66px;transform:scaleY(0.9);transform-origin:0 11.34px;left:1409.6px;">Facture d'acompte créée</div>
<div class="t" style="font-size:13.9px;font-weight:400;color:#6b7075;top:516.93px;transform:scaleY(0.9);transform-origin:0 11.77px;left:1409.6px;">07/02/2026 <span style="color:#a9adb2;margin:0 1.5px;">–</span> <u style="color:#2b5b8c">FT202602002</u></div>
<div class="r" style="left:1380px;top:557px;width:8px;height:8px;border-radius:50%;background:#7b5fe2;box-shadow:0 0 0 2px #fff;"></div>
<div class="t" style="font-size:13.4px;font-weight:700;color:#26292d;top:556.66px;transform:scaleY(0.9);transform-origin:0 11.34px;left:1409.6px;">Devis envoyé par Email</div>
<div class="t" style="font-size:13.9px;font-weight:400;color:#6b7075;top:580.93px;transform:scaleY(0.9);transform-origin:0 11.77px;left:1409.6px;">29/01/2026 <span style="color:#a9adb2;margin:0 1.5px;">–</span> à Rhoncus LLC (orci.ut@icloud.com) <span style="color:#a9adb2;margin:0 1.5px;">–</span></div>
<div class="t" style="font-size:13.9px;font-weight:400;color:#6b7075;top:604.93px;transform:scaleY(0.9);transform-origin:0 11.77px;left:1409.6px;"><u style="color:#2b5b8c">DE202601001</u></div>
<div class="r" style="left:1380px;top:645px;width:8px;height:8px;border-radius:50%;background:#7b5fe2;box-shadow:0 0 0 2px #fff;"></div>
<div class="t" style="font-size:13.4px;font-weight:700;color:#26292d;top:644.66px;transform:scaleY(0.9);transform-origin:0 11.34px;left:1409.6px;">Devis envoyé par Email</div>
<div class="t" style="font-size:13.9px;font-weight:400;color:#6b7075;top:668.93px;transform:scaleY(0.9);transform-origin:0 11.77px;left:1409.6px;">29/01/2026 <span style="color:#a9adb2;margin:0 1.5px;">–</span> à Sit Amet PC</div>
<div class="t" style="font-size:13.9px;font-weight:400;color:#6b7075;top:692.93px;transform:scaleY(0.9);transform-origin:0 11.77px;left:1409.6px;">(tellus.suspendisse@icloud.net) <span style="color:#a9adb2;margin:0 1.5px;">–</span> <u style="color:#2b5b8c">DE202601001</u></div>
<div class="r" style="left:1380px;top:733px;width:8px;height:8px;border-radius:50%;background:#7b5fe2;box-shadow:0 0 0 2px #fff;"></div>
<div class="t" style="font-size:13.4px;font-weight:700;color:#26292d;top:732.66px;transform:scaleY(0.9);transform-origin:0 11.34px;left:1409.6px;">Devis créé</div>
<div class="t" style="font-size:13.9px;font-weight:400;color:#6b7075;top:756.93px;transform:scaleY(0.9);transform-origin:0 11.77px;left:1409.6px;">21/01/2026 <span style="color:#a9adb2;margin:0 1.5px;">–</span> <u style="color:#2b5b8c">DE202601001</u></div>
</body></html>
